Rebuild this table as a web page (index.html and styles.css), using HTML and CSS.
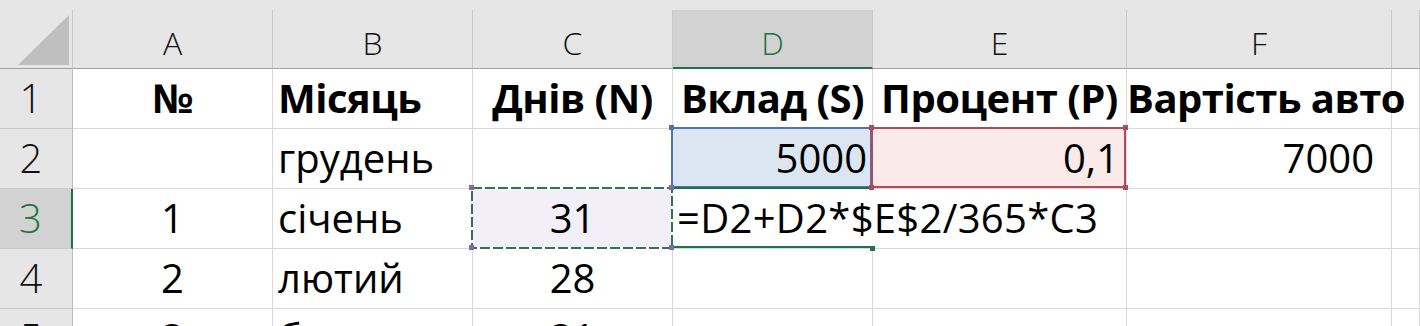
FILE: index.html
```html
<!DOCTYPE html>
<html lang="uk">
<head>
<meta charset="utf-8">
<title>Sheet</title>
<link rel="stylesheet" href="styles.css">
</head>
<body>
<div class="sheet">
  <div class="topstrip"></div>
  <div class="grid">
    <div class="corner"><svg class="tri" width="73" height="58" viewBox="0 0 73 58"><polygon points="69,5 69,55 18,55" fill="#bfbfbf"/></svg></div>
    <div class="ch">A</div>
    <div class="ch">B</div>
    <div class="ch">C</div>
    <div class="ch ch-sel">D</div>
    <div class="ch">E</div>
    <div class="ch">F</div>
    <div class="ch"></div>

    <div class="rh">1</div>
    <div class="c b ctr">№</div>
    <div class="c b l">Місяць</div>
    <div class="c b ctr">Днів (N)</div>
    <div class="c b ctr">Вклад (S)</div>
    <div class="c b ctr">Процент (P)</div>
    <div class="c b ctr">Вартість авто</div>
    <div class="c"></div>

    <div class="rh">2</div>
    <div class="c"></div>
    <div class="c l">грудень</div>
    <div class="c"></div>
    <div class="c r ref-blue">5000<span class="hd hd-blue tl"></span></div>
    <div class="c r r-e ref-red">0,1<span class="hd hd-red tl"></span><span class="hd hd-red tr"></span><span class="hd hd-red bl"></span><span class="hd hd-red br"></span></div>
    <div class="c r r-f">7000</div>
    <div class="c"></div>

    <div class="rh rh-sel">3</div>
    <div class="c ctr">1</div>
    <div class="c l">січень</div>
    <div class="c ctr ref-ants">31<svg class="ants" viewBox="0 0 202 62" preserveAspectRatio="none"><rect x="1" y="1" width="200" height="60" fill="none" stroke="#ffffff" stroke-width="2"/><rect x="1" y="1" width="200" height="60" fill="none" stroke="#2f7351" stroke-width="2" stroke-dasharray="10 3"/></svg><span class="hd hd-pur tl"></span><span class="hd hd-pur tr"></span><span class="hd hd-pur bl"></span><span class="hd hd-pur br"></span></div>
    <div class="c l2 active">=D2+D2*$E$2/365*C3<span class="fill"></span></div>
    <div class="c"></div>
    <div class="c"></div>
    <div class="c"></div>

    <div class="rh">4</div>
    <div class="c ctr">2</div>
    <div class="c l">лютий</div>
    <div class="c ctr">28</div>
    <div class="c"></div>
    <div class="c"></div>
    <div class="c"></div>
    <div class="c"></div>

    <div class="rh">5</div>
    <div class="c ctr">3</div>
    <div class="c l">березень</div>
    <div class="c ctr">31</div>
    <div class="c"></div>
    <div class="c"></div>
    <div class="c"></div>
    <div class="c"></div>
  </div>
</div>
</body>
</html>
```

FILE: styles.css
```css
html, body {
  margin: 0;
  padding: 0;
}
body {
  width: 1420px;
  height: 326px;
  overflow: hidden;
  background: #ffffff;
  font-family: "Open Sans", "Noto Sans", sans-serif;
}
.topstrip {
  height: 10px;
  background: #e6e6e6;
}
.grid {
  display: grid;
  grid-template-columns: 73px 200px 200px 200px 200px 254px 265px 1fr;
  grid-template-rows: 59px repeat(5, 60px);
}
.grid > div {
  box-sizing: border-box;
  min-width: 0;
}
.corner {
  background: #e6e6e6;
  border-right: 1px solid #c8c8c8;
  border-bottom: 1px solid #a0a0a0;
}
.tri {
  display: block;
}
.ch {
  background: #e6e6e6;
  border-right: 1px solid #c8c8c8;
  border-bottom: 1px solid #a0a0a0;
  text-align: center;
  font-size: 32px;
  font-weight: 300;
  line-height: 44px;
  padding-top: 11px;
  color: #111;
}
.ch-sel {
  background: #d2d2d2;
  color: #217346;
  border-bottom: 2px solid #217346;
}
.rh {
  background: #e6e6e6;
  border-right: 1px solid #bcbcbc;
  border-bottom: 1px solid #c8c8c8;
  text-align: center;
  padding-right: 10px;
  font-size: 40px;
  font-weight: 300;
  line-height: 57px;
  color: #111;
}
.rh-sel {
  background: #d2d2d2;
  color: #217346;
  border-right: 2px solid #217346;
}
.c {
  position: relative;
  border-right: 1px solid #d9d9d9;
  border-bottom: 1px solid #d9d9d9;
  font-size: 40px;
  line-height: 57px;
  white-space: nowrap;
  color: #000;
}
.b {
  font-weight: 700;
  letter-spacing: -0.5px;
}
.l {
  padding-left: 5px;
}
.l2 {
  padding-left: 4px;
  letter-spacing: 0.3px;
}
.r {
  text-align: right;
  padding-right: 5px;
}
.r-e {
  padding-right: 7px;
}
.r-f {
  padding-right: 17px;
}
.ctr {
  text-align: center;
}
.ref-blue {
  background: #dce6f2;
}
.ref-blue::before {
  content: "";
  position: absolute;
  top: -2px;
  left: -2px;
  right: 0;
  bottom: 0;
  border: 2px solid #4f72b0;
  z-index: 1;
}
.ref-red {
  background: #fbeaea;
}
.ref-red::before {
  content: "";
  position: absolute;
  top: -2px;
  left: -2px;
  right: 0;
  bottom: 0;
  border: 2px solid #b04b5c;
  z-index: 1;
}
.ref-ants {
  background: #f2eff8;
}
.ants {
  position: absolute;
  top: -2px;
  left: -2px;
  width: 202px;
  height: 62px;
  z-index: 1;
}
.active {
  border-right-color: transparent;
}
.active::before {
  content: "";
  position: absolute;
  top: -2px;
  left: 0;
  right: 0;
  bottom: 0;
  border-top: 2px solid #217346;
  border-bottom: 2px solid #217346;
  z-index: 1;
}
.fill {
  position: absolute;
  right: -3px;
  bottom: -3px;
  width: 5px;
  height: 5px;
  background: #217346;
  z-index: 3;
}
.hd {
  position: absolute;
  width: 5px;
  height: 5px;
  z-index: 3;
}
.hd.tl { top: -4px; left: -4px; }
.hd.tr { top: -4px; right: -2px; }
.hd.bl { bottom: -2px; left: -4px; }
.hd.br { bottom: -2px; right: -2px; }
.hd-blue { background: #4f72b0; }
.hd-red { background: #b04b5c; }
.hd-pur { background: #8566a8; }
```
